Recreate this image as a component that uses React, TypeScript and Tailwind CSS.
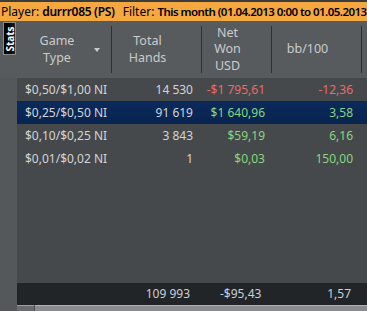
import React from "react";

const rows = [
  { g: "$0,50/$1,00 NI", h: "14 530", n: "-$1 795,61", b: "-12,36", neg: true, sel: false },
  { g: "$0,25/$0,50 NI", h: "91 619", n: "$1 640,96", b: "3,58", neg: false, sel: true },
  { g: "$0,10/$0,25 NI", h: "3 843", n: "$59,19", b: "6,16", neg: false, sel: false },
  { g: "$0,01/$0,02 NI", h: "1", n: "$0,03", b: "150,00", neg: false, sel: false },
];

export default function App() {
  return (
    <div
      className="w-[367px] h-[311px] overflow-hidden flex flex-col bg-[#55585a]"
      style={{ fontFamily: '"Noto Sans", "Liberation Sans", sans-serif' }}
    >
      <div className="h-[2px] bg-[#3a3c3e] shrink-0" />
      <div className="h-[19px] shrink-0 bg-[#f4a83f] text-black text-[12px] leading-[19px] whitespace-nowrap overflow-hidden pl-[1px]">
        <span>Player: </span>
        <span className="font-semibold tracking-[-0.3px]">durrr085 (PS)</span>
        <span className="ml-[8px]">Filter: </span>
        <span className="font-semibold text-[11.5px] tracking-[-0.55px]">This month (01.04.2013 0:00 to 01.05.2013 0:00)</span>
      </div>
      <div className="flex flex-1 min-h-0">
        <div className="w-[17px] shrink-0 flex flex-col">
          <div className="h-[57px] bg-[#585b5d] pt-[1px] pl-[3px]">
            <div className="w-[13px] h-[33px] border border-[#8a8c8e] bg-gradient-to-r from-[#000] to-[#222] flex items-center justify-center overflow-hidden">
              <span className="-rotate-90 text-white text-[10px] font-bold leading-none whitespace-nowrap">Stats</span>
            </div>
          </div>
          <div className="flex-1 bg-[#55585a]" />
        </div>
        <div className="flex-1 flex flex-col min-w-0">
          <div className="h-[57px] shrink-0 bg-[#585b5d] flex text-[12.5px] leading-[16.5px] text-[#c9cbcd]">
            <div className="w-[94px] shrink-0 flex items-center relative">
              <div className="w-[80px] text-center">Game<br />Type</div>
              <div className="w-0 h-0 border-l-[3.5px] border-r-[3.5px] border-t-[4px] border-l-transparent border-r-transparent border-t-[#c9cbcd] ml-[-3px]" />
            </div>
            <div className="w-px my-[5px] bg-[#2e3032]" />
            <div className="w-[89px] shrink-0 flex items-center justify-center pr-[18px]">
              <div className="text-center">Total<br />Hands</div>
            </div>
            <div className="w-px my-[5px] bg-[#2e3032]" />
            <div className="w-[69px] shrink-0 flex items-center justify-center pr-[18px]">
              <div className="text-center">Net<br />Won<br />USD</div>
            </div>
            <div className="w-px my-[5px] bg-[#2e3032]" />
            <div className="w-[89px] shrink-0 flex items-center justify-center pr-[18px]">
              <div className="text-center">bb/100</div>
            </div>
            <div className="w-px my-[5px] bg-[#2e3032]" />
            <div className="flex-1" />
          </div>
          <div className="flex-1 bg-[#46494b] flex flex-col text-[12px] text-[#d2d4d6]">
            {rows.map((r, i) => (
              <div
                key={i}
                className={
                  "h-[23px] flex items-center whitespace-nowrap " +
                  (r.sel ? "bg-gradient-to-b from-[#0b2a5c] to-[#08244f]" : "")
                }
              >
                <div className="w-[94px] shrink-0 overflow-hidden pl-[8px]">{r.g}</div>
                <div className="w-[90px] shrink-0 text-right pr-[8px]">{r.h}</div>
                <div className={"w-[70px] shrink-0 text-right pr-[6px] " + (r.neg ? "text-[#e76c6a]" : "text-[#88d67f]")}>{r.n}</div>
                <div className={"w-[90px] shrink-0 text-right pr-[8px] " + (r.neg ? "text-[#e76c6a]" : "text-[#88d67f]")}>{r.b}</div>
              </div>
            ))}
          </div>
          <div className="h-[22px] shrink-0 bg-[#222527] flex items-center text-[12px] text-[#c9d1d9] whitespace-nowrap">
            <div className="w-[94px] shrink-0" />
            <div className="w-[90px] shrink-0 text-right pr-[11px]">109 993</div>
            <div className="w-[70px] shrink-0 pl-[19px]">-$95,43</div>
            <div className="w-[90px] shrink-0 text-right pr-[10px]">1,57</div>
          </div>
          <div className="h-[6px] shrink-0 bg-[#4d5052] flex">
            <div className="w-[17px] border-t border-[#9a9c9e] bg-[#6a6c6e]" />
            <div className="flex-1 ml-[1px] border-t border-[#b0b2b4] bg-[#8a8c8e]" />
          </div>
        </div>
      </div>
    </div>
  );
}
